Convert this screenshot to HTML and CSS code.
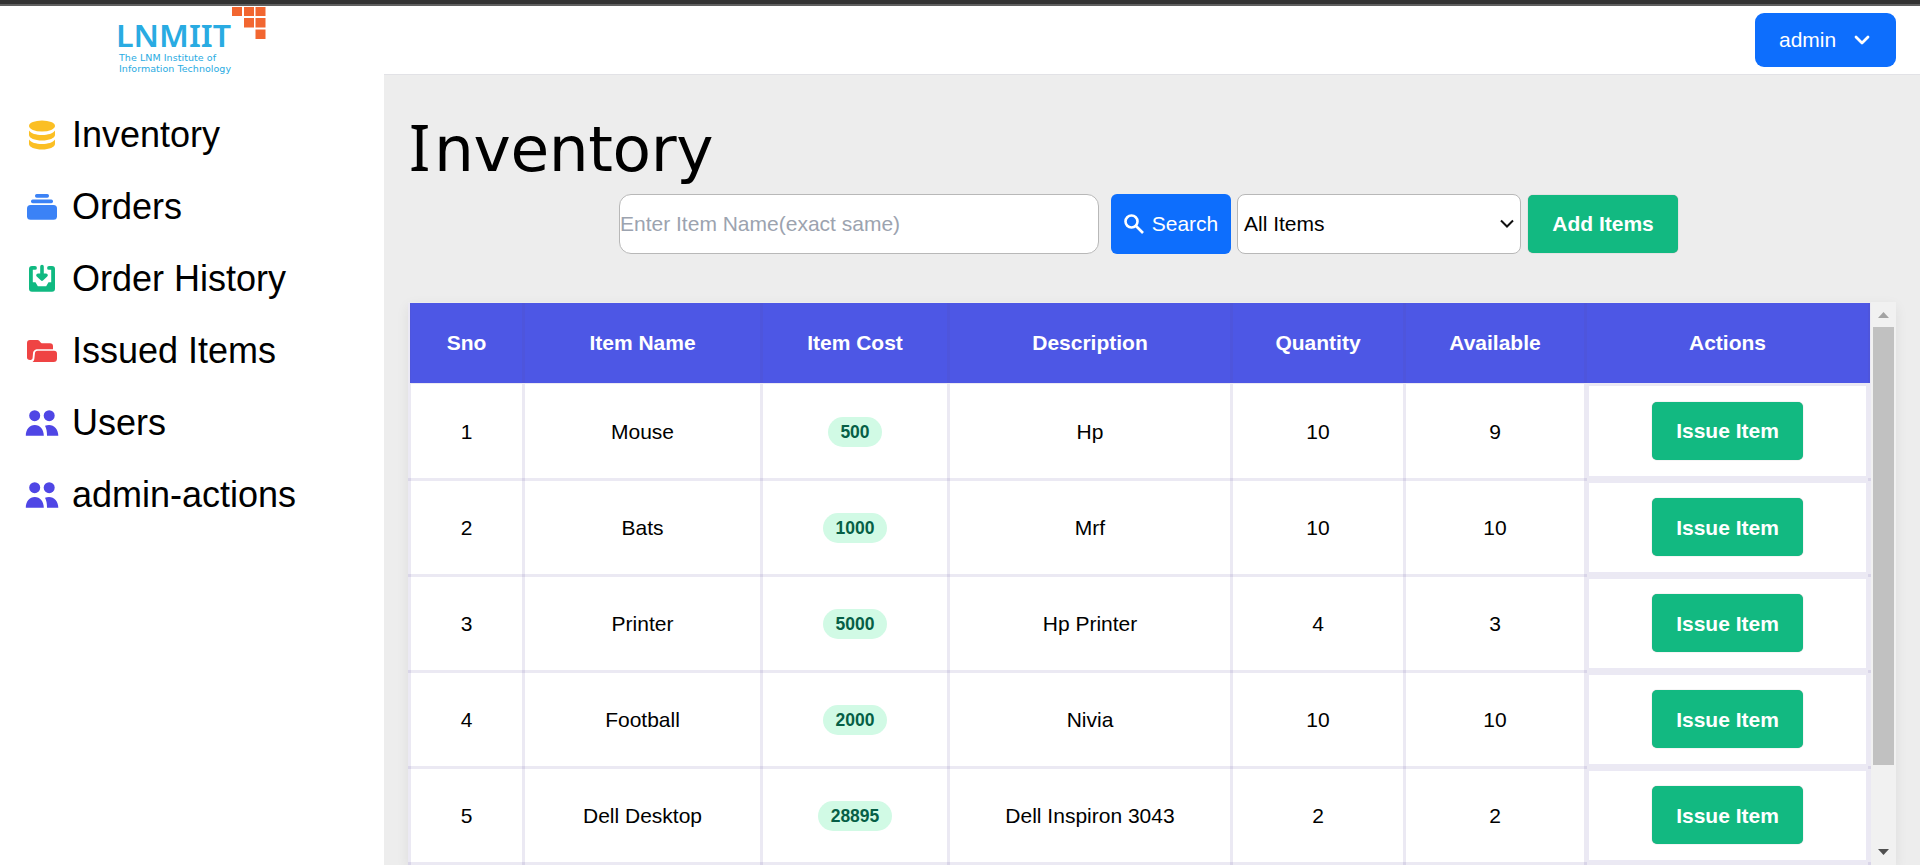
FILE: index.html
```html
<!DOCTYPE html>
<html lang="en">
<head>
<meta charset="utf-8">
<title>Inventory</title>
<link rel="stylesheet" href="styles.css">
</head>
<body>
<div class="topbar"></div>
<div class="app">
  <aside class="sidebar">
    <svg class="logo" width="160" height="70" viewBox="0 0 160 70" role="img">
      <g fill="#f26630"><rect x="122" y="1" width="10" height="9"/><rect x="134" y="1" width="10" height="9"/><rect x="145.500" y="1" width="10" height="9"/><rect x="134" y="12" width="10" height="9.500"/><rect x="145.500" y="12" width="10" height="9.500"/><rect x="145.500" y="23.500" width="10" height="9.500"/></g>
      <g fill="#29abe2"><text class="logo-name" x="6" y="41" textLength="115" lengthAdjust="spacingAndGlyphs">LNMIIT</text>
      <text class="logo-sub" x="9" y="55" textLength="97">The LNM Institute of</text>
      <text class="logo-sub" x="9" y="66" textLength="112">Information Technology</text></g>
    </svg>
    <nav class="nav">
      <a class="nav-item"><svg class="icon" viewBox="0 0 34 34" fill="#fbbf24"><ellipse cx="17" cy="8" rx="13" ry="5.500"/><path d="M4 12.500c2 3 7 4.500 13 4.500s11-1.500 13-4.500V17c0 3-5.800 5.500-13 5.500S4 20 4 17z"/><path d="M4 21.500c2 3 7 4.500 13 4.500s11-1.500 13-4.500V26c0 3-5.800 5.500-13 5.500S4 29 4 26z"/></svg>Inventory</a>
      <a class="nav-item"><svg class="icon" viewBox="0 0 34 34" fill="#3b82f6"><rect x="10" y="4" width="14" height="3.700" rx="1.700"/><rect x="6" y="9.500" width="22" height="3.700" rx="1.700"/><rect x="2" y="15" width="30" height="14.700" rx="3.500"/></svg>Orders</a>
      <a class="nav-item"><svg class="icon" viewBox="0 0 34 34" fill="#10b981"><path d="M7 4h3a1.900 1.900 0 0 1 0 3.800H7.800v12.400h2.700l2.300 4h8.400l2.300-4h2.700V7.800H24A1.900 1.900 0 0 1 24 4h3a3 3 0 0 1 3 3v19.800a3 3 0 0 1-3 3H7a3 3 0 0 1-3-3V7a3 3 0 0 1 3-3z"/><path d="M17 4.500v12M13 13.200l4 3.800 4-3.800z" stroke="#10b981" stroke-width="3.600" stroke-linecap="round" stroke-linejoin="round"/></svg>Order History</a>
      <a class="nav-item"><svg class="icon" viewBox="0 0 34 34" fill="#ef4444"><path d="M2 9a3 3 0 0 1 3-3h7.500c2.500 0 2.500 3.300 5 3.300H25a3 3 0 0 1 3 3v3H13c-3.500 0-4.700 1.700-5 4.200l-.4 4.500c-.2 1.500-1.300 2-2.600 2C3 26 2 25 2 23.500z"/><path d="M13 16.700h16a3 3 0 0 1 3 3v4.800a3.500 3.500 0 0 1-3.500 3.500H7.500c1.300-.8 1.700-2 1.900-3.500l.5-4.800a3 3 0 0 1 3.100-3z"/></svg>Issued Items</a>
      <a class="nav-item"><svg class="icon" viewBox="0 0 34 34" fill="#4f46e5"><circle cx="9.700" cy="9.700" r="5.500"/><circle cx="24.200" cy="9.700" r="5.500"/><path d="M.8 29.700C.8 23.500 4.600 19 9.800 19s9 4.500 9 10.700zM20 19.800c1.300-.6 2.800-.8 4-.8 5.200 0 9.300 4.500 9.300 10.700H22c0-4-.5-7.200-2-9.900z"/></svg>Users</a>
      <a class="nav-item"><svg class="icon" viewBox="0 0 34 34" fill="#4f46e5"><circle cx="9.700" cy="9.700" r="5.500"/><circle cx="24.200" cy="9.700" r="5.500"/><path d="M.8 29.700C.8 23.500 4.600 19 9.800 19s9 4.500 9 10.700zM20 19.800c1.300-.6 2.800-.8 4-.8 5.200 0 9.300 4.500 9.300 10.700H22c0-4-.5-7.200-2-9.900z"/></svg>admin-actions</a>
    </nav>
  </aside>
  <div class="page">
    <header class="header">
      <button class="user-btn">admin<svg width="18" height="12" viewBox="0 0 18 12" fill="none" stroke="#fff" stroke-width="2.800" stroke-linecap="round" stroke-linejoin="round"><path d="M3 3l6 6 6-6"/></svg></button>
    </header>
    <main class="main">
      <h1 class="title"><span class="title-cap">I</span>nventory</h1>
      <div class="toolbar">
        <input class="search-input" placeholder="Enter Item Name(exact same)">
        <button class="search-btn"><svg width="20" height="20" viewBox="0 0 20 20" fill="none" stroke="#fff" stroke-width="2.600"><circle cx="7.500" cy="7.500" r="6"/><path d="M12 12l7 7"/></svg>Search</button>
        <div class="select">All Items<svg width="14" height="10" viewBox="0 0 14 10" fill="none" stroke="#111" stroke-width="2"><path d="M1 1.500l6 6 6-6"/></svg></div>
        <button class="green-btn add-btn">Add Items</button>
      </div>
      <div class="table-wrap">
        <table class="table">
          <colgroup><col class="c1"><col class="c2"><col class="c3"><col class="c4"><col class="c5"><col class="c6"><col class="c7"></colgroup>
          <thead><tr><th>Sno</th><th>Item Name</th><th>Item Cost</th><th>Description</th><th>Quantity</th><th>Available</th><th>Actions</th></tr></thead>
          <tbody>
            <tr><td>1</td><td>Mouse</td><td><span class="pill">500</span></td><td>Hp</td><td>10</td><td>9</td><td class="action"><button class="green-btn">Issue Item</button></td></tr>
            <tr><td>2</td><td>Bats</td><td><span class="pill">1000</span></td><td>Mrf</td><td>10</td><td>10</td><td class="action"><button class="green-btn">Issue Item</button></td></tr>
            <tr><td>3</td><td>Printer</td><td><span class="pill">5000</span></td><td>Hp Printer</td><td>4</td><td>3</td><td class="action"><button class="green-btn">Issue Item</button></td></tr>
            <tr><td>4</td><td>Football</td><td><span class="pill">2000</span></td><td>Nivia</td><td>10</td><td>10</td><td class="action"><button class="green-btn">Issue Item</button></td></tr>
            <tr><td>5</td><td>Dell Desktop</td><td><span class="pill">28895</span></td><td>Dell Inspiron 3043</td><td>2</td><td>2</td><td class="action"><button class="green-btn">Issue Item</button></td></tr>
          </tbody>
        </table>
        <div class="scrollbar">
          <svg class="arrow" width="11" height="6" viewBox="0 0 11 6"><path fill="#a3a3a3" d="M0 6L5.500 0 11 6z"/></svg>
          <div class="thumb"></div>
          <svg class="arrow arrow-down" width="11" height="6" viewBox="0 0 11 6"><path fill="#505050" d="M0 0h11L5.500 6z"/></svg>
        </div>
      </div>
    </main>
  </div>
</div>
</body>
</html>
```
FILE: styles.css
```css
* { box-sizing: border-box; }
body { margin: 0; height: 865px; overflow: hidden; font-family: "Liberation Sans", Arial, sans-serif; font-size: 21px; color: #000; background: #fff; }
button { font: inherit; border: 0; padding: 0; color: #fff; }
.topbar { height: 6px; background: #333; border-bottom: 2px solid #5f5f5f; }
.app { display: flex; height: 859px; }
.sidebar { width: 384px; flex: none; }
.logo { display: block; margin-left: 110px; }
.logo-name { font: 600 31px "Noto Sans", sans-serif; }
.logo-sub { font: 9.500px "DejaVu Sans", sans-serif; }
.nav { padding: 23px 25px; }
.nav-item { display: flex; align-items: center; gap: 13px; height: 72px; font-size: 36px; white-space: nowrap; }
.icon { width: 34px; height: 34px; flex: none; }
.page { flex: 1; display: flex; flex-direction: column; }
.header { height: 69px; flex: none; display: flex; justify-content: flex-end; padding: 7px 24px 0 0; border-bottom: 1px solid #e2e2e6; }
.user-btn { display: flex; align-items: center; gap: 17px; width: 141px; height: 54px; padding-left: 24px; border-radius: 9px; background: #0d6efd; }
.main { flex: 1; background: #ededed; padding: 34px 24px 0; overflow: hidden; }
.title { margin: 0; height: 85px; padding: 1px 0 0 1px; font: 400 63px/80px "DejaVu Sans", sans-serif; letter-spacing: -0.4px; }
.title-cap { font-family: "Noto Sans", sans-serif; line-height: 1; margin-right: 4px; }
.toolbar { display: flex; align-items: center; height: 60px; margin-left: 211px; }
.search-input { width: 480px; height: 60px; border: 1px solid #b8b8b8; border-radius: 12px; padding: 0 0 1px; font: inherit; background: #fff; }
.search-input::placeholder { color: #9ca3af; }
.search-btn { display: flex; align-items: center; justify-content: center; gap: 8px; width: 120px; height: 60px; margin-left: 12px; border-radius: 6px; background: #0d6efd; }
.select { display: flex; align-items: center; justify-content: space-between; width: 284px; height: 60px; margin: 0 7px 0 6px; padding: 0 6px 1px; border: 1px solid #b8b8b8; border-radius: 8px; background: #fff; }
.green-btn { width: 151px; height: 58px; padding-top: 1px; border-radius: 5px; background: #12b981; font-weight: 700; box-shadow: 0 0 1px rgba(0,0,0,.4); }
.add-btn { width: 150px; padding-top: 0; }
.table-wrap { display: flex; justify-content: space-between; align-items: flex-start; width: 1488px; height: 563px; margin-top: 48px; box-shadow: 0 4px 12px rgba(0,0,0,.07); }
.table { width: 1462px; margin-top: 1px; flex: none; table-layout: fixed; border-collapse: collapse; background: #fff; text-align: center; }
.c1 { width: 114px; }
.c2 { width: 238px; }
.c3 { width: 187px; }
.c4 { width: 283px; }
.c5 { width: 173px; }
.c6 { width: 181px; }
.c7 { width: 284px; }
.table th { height: 80px; padding: 0; background: #4d57e5; color: #fff; border: 3px solid rgba(88,70,160,.12); border-width: 0 3px; }
.table td { height: 96px; padding: 2px 0 0; border: 3px solid rgba(88,70,160,.12); }
.table tbody tr:first-child td { border-top-width: 1px; }
.table .action { padding: 0; box-shadow: inset 0 0 0 2px #ebe9f4; }
.pill { display: inline-block; height: 30px; line-height: 30px; padding: 0 12.500px; border-radius: 15px; background: #d1fae5; color: #065f46; font-size: 17.500px; font-weight: 700; vertical-align: middle; }
.scrollbar { width: 25px; flex: none; height: 563px; background: #f1f1f1; display: flex; flex-direction: column; align-items: center; padding: 10px 0; }
.arrow { display: block; flex: none; }
.thumb { width: 21px; height: 438px; margin-top: 9px; background: #c1c1c1; }
.arrow-down { margin-top: auto; }
```
